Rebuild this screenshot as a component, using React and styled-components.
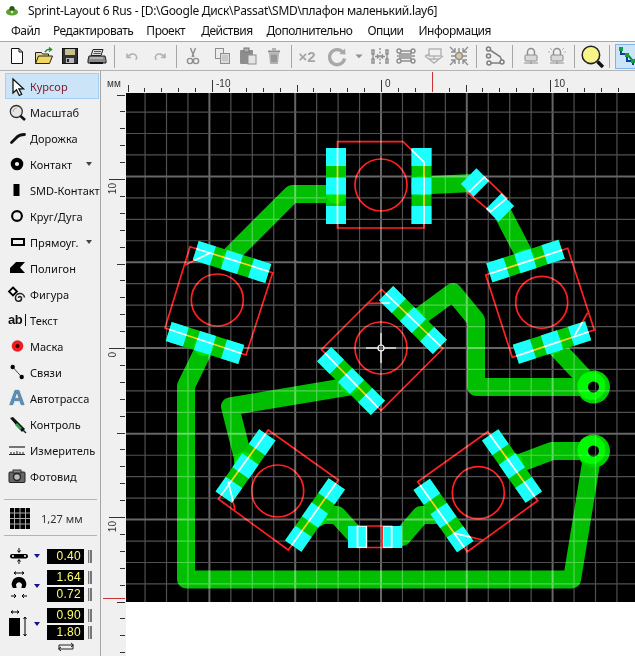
import React from "react";
import styled, { createGlobalStyle } from "styled-components";

const Global = createGlobalStyle`
  html, body { margin: 0; padding: 0; background: #fff; }
  body { font-family: "Noto Sans", "Open Sans", sans-serif; overflow: hidden; }
`;

const Window = styled.div`
  width: 635px; height: 656px; display: flex; flex-direction: column; overflow: hidden; background: #fff; color: #000;
`;
const TitleBar = styled.div`
  height: 20px; display: flex; align-items: center; padding-left: 6px; gap: 10px; font-size: 12px; color: #111; white-space: nowrap; letter-spacing: -0.3px;
`;
const MenuBar = styled.div`
  height: 21px; display: flex; align-items: center; padding-left: 11px; font-size: 12px; color: #111; border-bottom: 1px solid #a8a8a8; white-space: nowrap;
`;
const MenuItem = styled.span`
  margin-right: ${p => p.$gap}px; letter-spacing: -0.5px;
`;
const ToolBar = styled.div`
  height: 28px; display: flex; align-items: center; padding-left: 3px; background: #f0f0f0; border-bottom: 1px solid #b4b4b4;
`;
const Tool = styled.div`
  width: ${p => p.$w}px; height: 26px; flex: none; display: flex; align-items: center; justify-content: center;
  & > svg { flex: none; overflow: visible; }
`;
const ToolText = styled.span`
  font: bold 15px "Liberation Sans", sans-serif; color: #a4a4a4;
`;
const ToolSep = styled.div`
  width: ${p => p.$w}px; height: 23px; flex: none; display: flex; justify-content: center;
  &::before { content: ""; width: 1px; background: #a6a6a6; }
`;
const ActiveTool = styled.div`
  margin-left: 5px; width: 22px; height: 25px; flex: none; background: #cce4f7; border: 1px solid #7eb4ea; box-sizing: border-box; display: flex; align-items: center; padding-left: 2px;
  & > svg { flex: none; }
`;
const Main = styled.div`
  flex: 1; display: flex; min-height: 0;
`;
const Side = styled.div`
  width: 100px; flex: none; box-sizing: content-box; background: #f0f0f0; border-right: 1px solid #a6a6a6; display: flex; flex-direction: column; padding-top: 3px;
`;
const Item = styled.div`
  height: ${p => (p.$active ? 24 : 26)}px; margin: ${p => (p.$active ? "0 2px 1px 6px" : "0 2px 0 6px")}; display: flex; align-items: center; position: relative; flex: none;
  background: ${p => (p.$active ? "#cce4f7" : "transparent")};
  outline: ${p => (p.$active ? "1px solid #a9cdee" : "none")};
  font-size: 11px; color: ${p => (p.$active ? "#7a1a2a" : "#111")};
  white-space: nowrap;
`;
const ItemIcon = styled.div`
  width: 24px; flex: none; display: flex; justify-content: center; align-items: center;
  margin-left: -1px; margin-right: 1px;
  & > svg { flex: none; overflow: visible; }
`;
const Caret = styled.div`
  position: absolute; left: 80px; top: 11px; width: 0; height: 0; border-left: 3.5px solid transparent; border-right: 3.5px solid transparent; border-top: 4px solid #444;
`;
const AbIcon = styled.span`
  font: bold 13px "Liberation Sans", sans-serif; color: #111; letter-spacing: -0.5px; border-right: 1px solid #111; padding-right: 3px; line-height: 12px;
`;
const AutoIcon = styled.span`
  font: 900 22px/22px "Liberation Sans", sans-serif; color: #5a8fb8; text-shadow: 0 0 1px #234;
`;
const SideRule = styled.div`
  height: 1px; background: #b4b4b4; margin: ${p => p.$m}; flex: none;
`;
const GridRow = styled.div`
  height: 22px; flex: none; display: flex; align-items: center; padding-left: 10px; gap: 11px; font-size: 11px; color: #333;
`;
const Param = styled.div`
  display: flex; align-items: center; padding-left: 8px; margin-bottom: ${p => p.$mb}px; flex: none;
`;
const ParamIcon = styled.div`
  width: 21px; flex: none; display: flex; justify-content: center;
  & > svg { flex: none; overflow: visible; }
`;
const BlueCaret = styled.div`
  width: 0; height: 0; border-left: 3.5px solid transparent; border-right: 3.5px solid transparent; border-top: 4px solid #12128c; margin: 0 7px 0 5px; flex: none;
`;
const Fields = styled.div`
  display: flex; flex-direction: column; gap: 2px;
`;
const FieldRow = styled.div`
  display: flex; align-items: center; gap: 4px;
`;
const Field = styled.div`
  width: 37px; height: 15px; background: #000; color: #ffff70; font: 12px/15px "Liberation Sans", sans-serif; text-align: right; padding-right: 3px; box-sizing: border-box; letter-spacing: 0.3px;
`;
const Grip = styled.div`
  width: 4px; height: 13px; flex: none; background: linear-gradient(90deg, #777 0 1.5px, #ccc 1.5px 2.5px, #777 2.5px);
`;
const SwapRow = styled.div`
  padding-left: 56px; margin-top: 1px; flex: none; height: 12px;
  & > svg { display: block; }
`;
const Work = styled.div`
  flex: 1; display: flex; flex-direction: column; min-width: 0;
`;
const TopRuler = styled.svg`
  display: block; width: 534px; height: 22px; background: #f0f0f0; flex: none;
`;
const WorkBody = styled.div`
  flex: 1; display: flex; min-height: 0;
`;
const LeftRuler = styled.svg`
  display: block; width: 25px; height: 563px; background: #f0f0f0; flex: none;
`;
const Board = styled.svg`
  display: block; width: 509px; height: 509px; background: #000; flex: none;
`;
const ScreenLayer = styled.g`
  mix-blend-mode: screen;
`;
const RulerText = styled.text`
  font: 10px "Liberation Sans", sans-serif; fill: #333;
`;

/* ---- board ---- */
const CYAN = "#1dffff";
const STRIP = "#00c800";
const TRACE = "#00bf00";
const strips = [
  [232, 262, 17.5], [205, 343, 17.5], [336, 186, 90], [421.5, 186, 90],
  [525.5, 261, -18], [552, 342.5, -18], [413, 320, 45], [351, 381, 45],
  [245.5, 466, -55], [315, 515, -55], [443.5, 515.5, 55], [512, 466, 55],
];
const joins = [
  [336, 194], [421.5, 185.5], [231, 261], [525, 259], [553, 344], [414, 318],
  [204, 346], [350, 384], [244, 462], [317, 517], [443, 516], [513, 463],
];
const StripBase = ({ x, y, a }) => (
  <rect x="-38" y="-10" width="76" height="20" fill={STRIP} transform={`translate(${x} ${y}) rotate(${a})`} />
);
const StripPads = ({ x, y, a }) => (
  <g transform={`translate(${x} ${y}) rotate(${a})`} fill={CYAN}>
    <rect x="-38" y="-10" width="18" height="20" />
    <rect x="-8.500" y="-10" width="17" height="20" />
    <rect x="20" y="-10" width="18" height="20" />
  </g>
);
const traces = [
  "M336,194 L292,194 L226,260",
  "M421,185.5 L473,183",
  "M500,208 L526,258",
  "M552,343 L593,387",
  "M415,320 L453,292 L476,320 L476,387 L593,387",
  "M206,345 L186,386 L186,579.5 L572,579.5 L593,451",
  "M352,386 L230,406.5 L243,458",
  "M316,515 L337,515 L357,537",
  "M402,537 L421,515 L444,515",
  "M512,466 L552,451 L593,451",
];
const silkShapes = [
  "190,246.7 272.7,272.7 246,355 165,328",
  "337.5,141.7 403,141.7 424,162 424,228 337.5,228",
  "485.7,275 567.7,248.3 594.3,330 512.3,357.3",
  "381.5,289.5 321.5,349.5 381,410.5 443,348.5",
  "268.3,430 338.3,480 288.3,550 218.3,499",
  "487.7,431.7 417.7,481.7 467.3,551.7 537.7,500.7",
  "468,193 484.5,177 506.7,198.3 490.7,211.7",
  "357.5,526 391.7,526 391.7,547.5 357.5,547.5",
];
const silkLines = [
  [185, 265, 210, 253], [587.7, 312.7, 575, 335], [366.7, 303.3, 390, 303],
  [228.3, 481.7, 235, 510], [455, 533.3, 483, 540], [366.7, 526, 366.7, 547.5], [382.7, 526, 382.7, 547.5],
];
const silkCircles = [[217.3, 300], [381, 185], [541.7, 302.3], [381, 348], [277.7, 491], [478.3, 492.7]];
const STEP = 21.45;
const gridX = Array.from({ length: 24 }, (_, i) => i - 11);
const gridY = Array.from({ length: 24 }, (_, i) => i - 12);
const Grid = () => (
  <>
    {gridX.map(k => {
      const major = ((k % 4) + 4) % 4 === 0;
      const x = 381 + k * STEP;
      return <line key={"v" + k} x1={x} x2={x} y1="93" y2="602" stroke={major ? "#666" : "#505050"} strokeWidth={major ? 2 : 1.2} />;
    })}
    {gridY.map(k => {
      const major = ((k % 4) + 4) % 4 === 0;
      const y = 348 + k * STEP;
      return <line key={"h" + k} y1={y} y2={y} x1="126" x2="635" stroke={major ? "#666" : "#505050"} strokeWidth={major ? 2 : 1.2} />;
    })}
  </>
);
const ThruPad = ({ x, y }) => (
  <g>
    <circle cx={x} cy={y} r="16.5" fill="#00d000" />
    <circle cx={x - 2} cy={y - 1} r="14" fill="#00f800" />
    <circle cx={x} cy={y} r="5.5" fill="#000" />
  </g>
);
const PcbBoard = () => (
  <Board viewBox="126 93 509 509">
    <rect x="126" y="93" width="509" height="509" fill="#000" />
    {traces.map((d, i) => (
      <path key={i} d={d} fill="none" stroke={TRACE} strokeWidth="18" strokeLinejoin="round" strokeLinecap="round" />
    ))}
    <ThruPad x={593.5} y={387} />
    <ThruPad x={593.5} y={451} />
    <ScreenLayer><Grid /></ScreenLayer>
    {strips.map(([x, y, a]) => <StripBase key={`${x}b`} x={x} y={y} a={a} />)}
    {joins.map(([x, y]) => <circle key={`${x}j`} cx={x} cy={y} r="10" fill="#00e400" />)}
    {strips.map(([x, y, a]) => <StripPads key={`${x}p`} x={x} y={y} a={a} />)}
    <rect x="466" y="171.5" width="18" height="22" fill={CYAN} transform="rotate(45 475 182.5)" />
    <rect x="491" y="196.5" width="18" height="22" fill={CYAN} transform="rotate(45 500 207.5)" />
    <rect x="348" y="526" width="19" height="22" fill={CYAN} />
    <rect x="383" y="526" width="19" height="22" fill={CYAN} />
    <ScreenLayer>
      <g fill="none" stroke="#ff2020" strokeWidth="1.7">
        {silkShapes.map((p, i) => <polygon key={i} points={p} />)}
        {silkLines.map((l, i) => <line key={i} x1={l[0]} y1={l[1]} x2={l[2]} y2={l[3]} />)}
        {silkCircles.map((c, i) => <circle key={i} cx={c[0]} cy={c[1]} r="26" />)}
      </g>
    </ScreenLayer>
    <g stroke="#fff" strokeWidth="1.2" fill="none">
      <line x1="366" x2="378" y1="348" y2="348" />
      <line x1="384" x2="396" y1="348" y2="348" />
      <line x1="381" x2="381" y1="333" y2="345" />
      <line x1="381" x2="381" y1="351" y2="363" />
      <circle cx="381" cy="348" r="3" />
    </g>
  </Board>
);

/* ---- rulers ---- */
const MM = 16.9;
const TopRulerView = () => {
  const ticks = Array.from({ length: 32 }, (_, i) => i - 15);
  return (
    <TopRuler viewBox="101 71 534 22">
      <RulerText x="107" y="87">мм</RulerText>
      {ticks.map(k => {
        const x = Math.round(381 + k * MM) + 0.5;
        const top = k % 10 === 0 ? 80 : k % 5 === 0 ? 85 : 88;
        return <line key={k} x1={x} x2={x} y1={top} y2="92" stroke="#333" />;
      })}
      <line x1="432.5" x2="432.5" y1="72" y2="92" stroke="#c83232" />
      <RulerText x="216" y="87">-10</RulerText>
      <RulerText x="385" y="87">0</RulerText>
      <RulerText x="554" y="87">10</RulerText>
    </TopRuler>
  );
};
const LeftRulerView = () => {
  const ticks = Array.from({ length: 36 }, (_, i) => i - 15);
  return (
    <LeftRuler viewBox="101 93 25 563">
      {ticks.map(k => {
        const y = Math.round(348 + k * MM) + 0.5;
        const left = k % 10 === 0 ? 109 : k % 5 === 0 ? 117 : 120;
        return <line key={k} x1={left} x2="125" y1={y} y2={y} stroke="#333" />;
      })}
      <line x1="103" x2="125" y1="598.5" y2="598.5" stroke="#c83232" />
      {[[179, "10"], [348, "0"], [517, "10"]].map(([y, t]) => (
        <RulerText key={y} textAnchor="end" transform={`translate(116 ${y + 4}) rotate(-90)`}>{t}</RulerText>
      ))}
    </LeftRuler>
  );
};

/* ---- toolbar icons ---- */
const I = ({ children, s = 22 }) => (
  <svg width={s} height={s} viewBox="0 0 22 22">{children}</svg>
);
const G1 = "#b2b2b2";
const G2 = "#8e8e8e";
const toolItems = [
  { w: 28, el: <I><path d="M5.500 3.500h7.500l3.500 3.500v11.500h-11z" fill="#fff" stroke="#111" /><path d="M13 3.500v3.500h3.500" fill="none" stroke="#111" /></I> },
  { w: 25, el: <I><path d="M2.500 18.500v-11h6l1 1.500h6v2" fill="#e8dc90" stroke="#222" /><path d="M2.500 18.500l3-7.500h14l-3 7.500z" fill="#f0d860" stroke="#222" /><path d="M12 7c2-3 4-3 6-2.500M16 2.500l2.500 2-2.500 2" fill="none" stroke="#2c8a2c" strokeWidth="1.5" /></I> },
  { w: 27, el: <I><rect x="3.500" y="3.500" width="15" height="15" fill="#333" stroke="#111" /><rect x="6" y="4" width="10" height="6" fill="#c6c08a" /><rect x="7" y="13" width="8" height="5" fill="#bbb" /><rect x="8" y="14" width="2" height="3" fill="#222" /></I> },
  { w: 27, el: <I><path d="M7 4.500h10l-2 6H5z" fill="#ddd" stroke="#222" /><path d="M8 6.500h7M7.500 8.500h7" stroke="#555" /><path d="M3 11h16l1 4v3H2v-3z" fill="#8a8a8a" stroke="#222" /><path d="M4 18h13" stroke="#111" strokeWidth="2" /><path d="M4 13h13" stroke="#ddd" /></I> },
  { sep: 8 },
  { w: 28, el: <I><path d="M6 8.500v4h4M6.500 12c2-3 6-4 8-2s1 4 0 4.500" fill="none" stroke={G1} strokeWidth="1.6" /></I> },
  { w: 28, el: <I><path d="M16 8.500v4h-4M15.500 12c-2-3-6-4-8-2s-1 4 0 4.500" fill="none" stroke={G1} strokeWidth="1.6" /></I> },
  { sep: 4 },
  { w: 30, el: <I><path d="M8.500 3l3.500 9M13.500 3l-3.500 9" stroke={G2} strokeWidth="1.4" /><circle cx="8" cy="16" r="2.600" fill="none" stroke={G2} strokeWidth="1.4" /><circle cx="14" cy="16" r="2.600" fill="none" stroke={G2} strokeWidth="1.4" /></I> },
  { w: 28, el: <I><rect x="4.500" y="3.500" width="8" height="10" fill="#ececec" stroke={G2} /><rect x="9.500" y="8.500" width="9" height="10" fill="#dcdcdc" stroke={G2} /><path d="M11 11h6M11 13h6M11 15h6" stroke={G1} /></I> },
  { w: 24, el: <I><rect x="3" y="5" width="13" height="14" rx="1" fill={G2} /><rect x="7" y="3" width="5" height="4" fill={G1} stroke="#777" /><rect x="11" y="10" width="8" height="9" fill="#e4e4e4" stroke={G2} /></I> },
  { w: 28, el: <I><path d="M5 6.500h12" stroke={G2} strokeWidth="2" /><rect x="9" y="3" width="4" height="3" fill={G1} /><path d="M6 8h10l-1 11H7z" fill={G1} /><path d="M9 10v7M11 10v7M13 10v7" stroke="#7c7c7c" /></I> },
  { sep: 6 },
  { w: 26, el: <ToolText>×2</ToolText> },
  { w: 34, el: <I><path d="M17 7.500a7.500 7.500 0 1 0 1.500 6" fill="none" stroke="#a8a8a8" strokeWidth="3.400" /><path d="M13.500 9l6 .5-.5-6z" fill="#a8a8a8" /></I> },
  { w: 10, el: <I s={8}><path d="M1 7h20L11 17z" fill="#909090" /></I> },
  { w: 32, el: <I><g fill="none" stroke={G2} strokeWidth="1.4"><path d="M3 5h2v4h-2zM3 14h2v4h-2zM17 5h2v4h-2zM17 14h2v4h-2z" /><path d="M4 9v5M18 9v5" /><path d="M11 3v17" strokeDasharray="2 1.500" /><path d="M6 11.500h3M8 9.500l2 2-2 2M16 11.500h-3M14 9.500l-2 2 2 2" /></g></I> },
  { w: 20, el: <I><g fill="none" stroke={G2} strokeWidth="1.4"><circle cx="4" cy="6" r="2" /><circle cx="18" cy="6" r="2" /><circle cx="4" cy="16" r="2" /><circle cx="18" cy="16" r="2" /><path d="M6 6h10v3H4M6 16h10v-3H4M2 11h18" /></g></I> },
  { w: 36, el: <I><g fill="none" stroke={G1} strokeWidth="1.4"><rect x="6" y="4" width="12" height="7" /><path d="M2 11l5-2M2 11l9 7 9-7M6 14h10" /><path d="M11 11v4" /></g></I> },
  { w: 14, el: <I><circle cx="11" cy="11" r="3.500" fill="#d8c8a0" stroke={G2} strokeWidth="1.600" /><g stroke={G2} strokeWidth="1.4"><path d="M2 2l5 5M7 3v4H3M20 2l-5 5M15 3v4h4M2 20l5-5M7 19v-4H3M20 20l-5-5M15 19v-4h4M11 3v4M11 15v4M3 11h4M15 11h4" fill="none" /></g></I> },
  { sep: 20 },
  { w: 18, el: <I><g fill="none" stroke="#7e7e7e" strokeWidth="1.5"><circle cx="4.500" cy="4" r="2" /><circle cx="4.500" cy="11" r="2" /><circle cx="5" cy="18" r="2" /><circle cx="18" cy="17" r="2" /><path d="M6 5l10 6.500 2 4M7 18h9" /></g></I> },
  { sep: 16 },
  { w: 22, el: <I><path d="M7.500 10V7a3.500 3.500 0 0 1 7 0v3" fill="none" stroke={G2} strokeWidth="1.5" /><rect x="5" y="10" width="12" height="6" rx="1" fill="#d8d8d8" stroke={G2} /><path d="M4 18h14M11 16v3" stroke={G2} /></I> },
  { w: 30, el: <I><path d="M7.500 10V7a3.500 3.500 0 0 1 7 0v3" fill="none" stroke={G2} strokeWidth="1.5" /><rect x="5" y="10" width="12" height="6" rx="1" fill="#d8d8d8" stroke={G2} /><path d="M4 18h14M11 16v3" stroke={G2} /><path d="M4 3l2 2M18 3l-2 2M2 7h2M18 7h2" stroke={G1} /></I> },
  { sep: 4 },
  { w: 32, el: <I s={24}><circle cx="10" cy="10" r="8" fill="#f8f488" stroke="#222" strokeWidth="1.4" /><path d="M16 16l5 5" stroke="#111" strokeWidth="3.2" /></I> },
  { sep: 2 },
];

/* ---- side icons ---- */
const sideItems = [
  { label: "Курсор", active: true, el: <I><path d="M7 4v14l3.500-3.200 2.800 5.700 2.400-1.200-2.800-5.400h4.600z" fill="#fff" stroke="#111" strokeWidth="1.3" /></I> },
  { label: "Масштаб", el: <I><circle cx="10.300" cy="10.500" r="6" fill="#e9e6e0" stroke="#333" strokeWidth="1.3" /><path d="M14.500 15l4.500 4" stroke="#111" strokeWidth="2.600" /><path d="M7 11a4 4 0 0 1 4-4" stroke="#aaa" fill="none" /></I> },
  { label: "Дорожка", el: <I><path d="M5.500 15.500L10 11Q13 7.500 18.500 7.500" fill="none" stroke="#111" strokeWidth="2.800" strokeLinecap="round" /></I> },
  { label: "Контакт", caret: true, el: <I><circle cx="11" cy="11" r="4.200" fill="none" stroke="#000" strokeWidth="4.200" /></I> },
  { label: "SMD-Контакт", el: <I><rect x="7.500" y="5" width="6" height="12" fill="#000" /></I> },
  { label: "Круг/Дуга", el: <I><circle cx="11" cy="11" r="4.900" fill="none" stroke="#000" strokeWidth="2.100" /></I> },
  { label: "Прямоуг.", caret: true, el: <I><rect x="6" y="8" width="12" height="6" fill="none" stroke="#000" strokeWidth="2" /></I> },
  { label: "Полигон", el: <I><path d="M4 16v-5l6-6h9l-5 5.500 5 5.500z" fill="#000" /></I> },
  { label: "Фигура", el: <I><path d="M7 4.500l4 4-4 4-4-4z" fill="#fff" stroke="#000" strokeWidth="1.800" /><path d="M12.500 15a1.500 1.500 0 0 1 3 0 3 3 0 0 1-6 .5 4.500 4.500 0 0 1 9-1" fill="none" stroke="#222" strokeWidth="1.500" /></I> },
  { label: "Текст", el: <AbIcon>ab</AbIcon> },
  { label: "Маска", el: <I><circle cx="11.500" cy="11" r="5.800" fill="#f01c22" /><circle cx="11.500" cy="11" r="2" fill="#300" /></I> },
  { label: "Связи", el: <I><path d="M6.700 6l9 10" stroke="#444" strokeWidth="1" /><circle cx="6.700" cy="6" r="2.200" fill="#000" /><circle cx="15.700" cy="16" r="2.200" fill="#000" /></I> },
  { label: "Автотрасса", el: <AutoIcon>A</AutoIcon> },
  { label: "Контроль", el: <I><path d="M4 5l3-1 12 12-3 3z" fill="#111" /><path d="M11 10l5 5-2 2-5-5z" fill="#2fa050" /><path d="M17 17l3 3" stroke="#222" strokeWidth="1.400" /></I> },
  { label: "Измеритель", el: <I><path d="M3 8h16" stroke="#222" strokeWidth="1.200" /><path d="M3 15.500h16M5 13v2M8 13v2M11 12v3M14 13v2M17 13v2" stroke="#222" fill="none" /></I> },
  { label: "Фотовид", el: <I><rect x="3" y="7" width="16" height="10.500" rx="1" fill="#666" stroke="#222" /><rect x="7" y="5" width="8" height="3" fill="#888" stroke="#333" /><circle cx="11" cy="12" r="3.500" fill="#bbb" stroke="#222" strokeWidth="1.400" /></I> },
];

const GridIcon = () => (
  <svg width="20" height="21" viewBox="0 0 20 21">
    <rect width="20" height="21" fill="#000" />
    <path d="M4.500 0v21M10 0v21M15.500 0v21M0 5h20M0 10.500h20M0 16h20" stroke="#aaa" strokeWidth="1" />
  </svg>
);

export default function App() {
  const menu = [["Файл", 13], ["Редактировать", 13], ["Проект", 16], ["Действия", 14], ["Дополнительно", 15], ["Опции", 15], ["Информация", 0]];
  return (
    <Window>
      <Global />
      <TitleBar>
        <svg width="12" height="11" viewBox="0 0 12 11" style={{ flex: "none" }}>
          <ellipse cx="6" cy="7" rx="6" ry="3.600" fill="#5aa02c" />
          <circle cx="6" cy="3.500" r="2.600" fill="#2a5a14" />
          <circle cx="6" cy="7" r="1.400" fill="#d8e8c0" />
        </svg>
        <span>Sprint-Layout 6 Rus - [D:\Google Диск\Passat\SMD\плафон маленький.lay6]</span>
      </TitleBar>
      <MenuBar>
        {menu.map(([t, g]) => <MenuItem key={t} $gap={g}>{t}</MenuItem>)}
      </MenuBar>
      <ToolBar>
        {toolItems.map((t, i) => t.sep ? <ToolSep key={i} $w={t.sep} /> : <Tool key={i} $w={t.w}>{t.el}</Tool>)}
        <ActiveTool>
          <svg width="20" height="22" viewBox="0 0 20 22">
            <path d="M3 3v6h6v7h6v4" fill="none" stroke="#103ca8" strokeWidth="2" />
            <path d="M9 9l6 7" stroke="#0a8a2c" strokeWidth="2" />
            <rect x="1" y="2" width="4" height="4" fill="#10a040" />
            <rect x="7" y="8" width="4" height="4" fill="#10a040" />
            <rect x="13" y="14" width="4" height="4" fill="#10a040" />
          </svg>
        </ActiveTool>
      </ToolBar>
      <Main>
        <Side>
          {sideItems.map(it => (
            <Item key={it.label} $active={it.active}>
              <ItemIcon>{it.el}</ItemIcon>
              {it.label}
              {it.caret && <Caret />}
            </Item>
          ))}
          <SideRule $m="10px 3px 7px 4px" />
          <GridRow><GridIcon /><span>1,27 мм</span></GridRow>
          <SideRule $m="6px 3px 10px 4px" />
          <Param $mb={4}>
            <ParamIcon>
              <svg width="20" height="20" viewBox="0 0 20 20"><rect x="1" y="8" width="18" height="4.500" rx="2.200" fill="#000" /><circle cx="4" cy="10" r="1" fill="#fff" /><circle cx="16" cy="10" r="1" fill="#fff" /><path d="M10 2v4M8.500 4.500L10 6.500l1.500-2M10 18v-4M8.500 15.500L10 13.500l1.500 2" fill="none" stroke="#000" /></svg>
            </ParamIcon>
            <BlueCaret />
            <FieldRow><Field>0.40</Field><Grip /></FieldRow>
          </Param>
          <Param $mb={6}>
            <ParamIcon>
              <svg width="20" height="30" viewBox="0 0 20 30"><path d="M5 2h10M5 2l2-1.500M5 2l2 1.500M15 2l-2-1.500M15 2l-2 1.500" fill="none" stroke="#000" /><path d="M10 6a7 7 0 0 0-6 11h3.500v-1a3 3 0 1 1 5 0v1H16A7 7 0 0 0 10 6z" fill="#000" /><path d="M2 25h5M5 23l2 2-2 2M18 25h-5M15 23l-2 2 2 2" fill="none" stroke="#000" /></svg>
            </ParamIcon>
            <BlueCaret />
            <Fields>
              <FieldRow><Field>1.64</Field><Grip /></FieldRow>
              <FieldRow><Field>0.72</Field><Grip /></FieldRow>
            </Fields>
          </Param>
          <Param $mb={0}>
            <ParamIcon>
              <svg width="22" height="30" viewBox="0 0 22 30"><path d="M3 3h8M3 3l2-1.500M3 3l2 1.500M11 3L9 1.500M11 3L9 4.500" fill="none" stroke="#000" /><rect x="1" y="9" width="11" height="18" fill="#000" /><path d="M17 8v19M15.500 10L17 8l1.500 2M15.500 25L17 27l1.500-2" fill="none" stroke="#000" /></svg>
            </ParamIcon>
            <BlueCaret />
            <Fields>
              <FieldRow><Field>0.90</Field><Grip /></FieldRow>
              <FieldRow><Field>1.80</Field><Grip /></FieldRow>
            </Fields>
          </Param>
          <SwapRow>
            <svg width="20" height="12" viewBox="0 0 20 12"><path d="M3 8V4h14M15 2l2.500 2L15 6M17 4v4H3M5 10L2.500 8 5 6" fill="none" stroke="#222" /></svg>
          </SwapRow>
        </Side>
        <Work>
          <TopRulerView />
          <WorkBody>
            <LeftRulerView />
            <PcbBoard />
          </WorkBody>
        </Work>
      </Main>
    </Window>
  );
}
